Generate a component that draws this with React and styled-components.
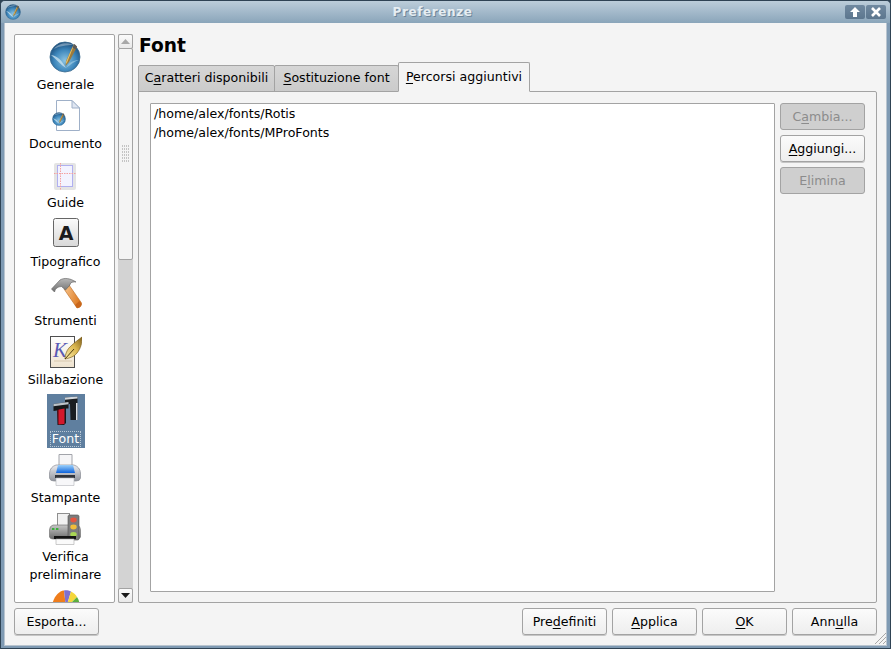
import styled, { createGlobalStyle } from "styled-components"

const GlobalStyle = createGlobalStyle`
    html, body {
        margin: 0;
        padding: 0;
        background: #2f4354;
    }
    * {
        box-sizing: border-box;
    }
`

const Window = styled.div`
    width: 891px;
    height: 649px;
    position: relative;
    display: flex;
    flex-direction: column;
    overflow: hidden;
    border-radius: 5px 5px 0 0;
    background: #7f9ab3;
    border: 1px solid #2f4354;
    font-family: "DejaVu Sans", sans-serif;
    font-size: 12.6px;
    color: #000000;
`

const TitleBar = styled.header`
    height: 22px;
    flex: none;
    display: flex;
    align-items: center;
    padding: 0 4px;
    background: linear-gradient(#bccdda, #8aa5ba);
`

const TitleText = styled.span`
    flex: 1;
    text-align: center;
    color: #e6edf2;
    font-weight: bold;
    font-size: 12px;
    letter-spacing: 0.6px;
    text-shadow: 1px 1px 0 #6d8599;
`

const TitleButton = styled.span`
    width: 20px;
    height: 14px;
    margin-left: 1px;
    border-radius: 2px;
    display: flex;
    align-items: center;
    justify-content: center;
    background: linear-gradient(#7089a0, #5c768e);
`

const Body = styled.main`
    flex: 1;
    min-height: 0;
    margin: 0 3px 2px 3px;
    padding: 11px 9px 10px 9px;
    display: flex;
    flex-direction: column;
    gap: 5px;
    background: #f4f4f4;
    border: solid #b8c4cf;
    border-width: 0 1px 1px 1px;
`

const MainRow = styled.div`
    flex: 1;
    min-height: 0;
    display: flex;
`

const Sidebar = styled.nav`
    width: 101px;
    flex: none;
    overflow: hidden;
    background: #ffffff;
    border: 1px solid #a3a3a3;
    border-radius: 2px;
    padding: 5px 0 0 2px;
    display: flex;
    flex-direction: column;
    align-items: center;
    gap: 5px;
`

const NavItem = styled.div`
    flex: none;
    display: flex;
    flex-direction: column;
    align-items: center;
    padding: 1px 3px 0;
    text-align: center;
    line-height: 18px;
    background: ${({ $selected }) => ($selected ? "#5f7f9f" : "transparent")};
    color: ${({ $selected }) => ($selected ? "#ffffff" : "#000000")};
`

const NavIcon = styled.svg`
    width: 32px;
    height: 32px;
    display: block;
    flex: none;
`

const NavLabel = styled.span`
    margin: ${({ $selected }) => ($selected ? "3px -1px 0" : "3px 0 0")};
    padding: ${({ $selected }) => ($selected ? "0 3px" : "0")};
    white-space: pre-line;
    outline: ${({ $selected }) => ($selected ? "1px dotted #b9c8d6" : "none")};
    outline-offset: -2px;
`

const ScrollBar = styled.div`
    width: 15px;
    flex: none;
    margin: 0 5px 0 3px;
    display: flex;
    flex-direction: column;
    background: #d3d3d3;
`

const ScrollButton = styled.div`
    height: 15px;
    flex: none;
    display: flex;
    align-items: center;
    justify-content: center;
    background: linear-gradient(#fbfbfb, #e9e9e9);
    border: 1px solid #a3a3a3;
    border-radius: 2px;
`

const ScrollTrack = styled.div`
    flex: 1;
    min-height: 0;
`

const ScrollThumb = styled.div`
    height: 212px;
    margin-top: -1px;
    display: flex;
    align-items: center;
    justify-content: center;
    background: #f4f4f4;
    border: 1px solid #a3a3a3;
    border-radius: 2px;
`

const Panel = styled.section`
    flex: 1;
    min-width: 0;
    display: flex;
    flex-direction: column;
`

const Heading = styled.h1`
    margin: 0;
    height: 28px;
    flex: none;
    padding: 1px 0 0 1px;
    font-size: 18.6px;
    line-height: 22px;
    font-weight: bold;
`

const TabRow = styled.div`
    height: 30px;
    flex: none;
    display: flex;
    align-items: flex-end;
    margin-bottom: -1px;
    position: relative;
    z-index: 1;
`

const Tab = styled.div`
    height: ${({ $active }) => ($active ? "30px" : "27px")};
    width: ${({ $width }) => $width}px;
    margin-left: ${({ $first }) => ($first ? "0" : "-1px")};
    display: flex;
    align-items: center;
    justify-content: center;
    padding-bottom: 2px;
    background: ${({ $active }) => ($active ? "#f4f4f4" : "linear-gradient(#d6d6d6, #cbcbcb)")};
    border: 1px solid #a3a3a3;
    border-bottom-color: ${({ $active }) => ($active ? "#f4f4f4" : "#a3a3a3")};
    border-radius: 2px 2px 0 0;
    white-space: nowrap;
`

const TabPane = styled.div`
    flex: 1;
    min-height: 0;
    display: flex;
    gap: 5px;
    padding: 11px 11px 10px 11px;
    border: 1px solid #a3a3a3;
    border-radius: 0 2px 2px 2px;
`

const PathList = styled.div`
    flex: 1;
    min-width: 0;
    padding: 0 3px;
    background: #ffffff;
    border: 1px solid #a3a3a3;
    border-radius: 1px;
    line-height: 19px;
`

const SideButtons = styled.div`
    width: 85px;
    flex: none;
    display: flex;
    flex-direction: column;
    gap: 5px;
`

const Button = styled.div`
    width: 85px;
    height: 27px;
    flex: none;
    display: flex;
    align-items: center;
    justify-content: center;
    white-space: nowrap;
    border: 1px solid #a3a3a3;
    border-radius: 3px;
    background: ${({ $disabled }) => ($disabled ? "#cfcfcf" : "linear-gradient(#fbfbfb, #eeeeee)")};
    color: ${({ $disabled }) => ($disabled ? "#8c8c8c" : "#000000")};
    box-shadow: ${({ $disabled }) => ($disabled ? "none" : "0 1px 0 #c6c6c6")};
`

const Footer = styled.footer`
    flex: none;
    display: flex;
    justify-content: space-between;
`

const FooterRight = styled.div`
    display: flex;
    gap: 5px;
`

const Key = styled.span`
    text-decoration: underline;
    text-underline-offset: 2px;
`

const ResizeGrip = styled.svg`
    position: absolute;
    right: 3px;
    bottom: 3px;
    width: 14px;
    height: 14px;
`

const Globe = ({ id, x = 0, y = 0, size = 32 }) => (
    <svg x={x} y={y} width={size} height={size} viewBox="0 0 32 32">
        <defs>
            <radialGradient id={id} cx="0.5" cy="0.62" r="0.6">
                <stop offset="0" stopColor="#8cc4e2" />
                <stop offset="0.6" stopColor="#3d86bb" />
                <stop offset="1" stopColor="#1d4f7c" />
            </radialGradient>
        </defs>
        <circle cx="16" cy="16" r="15" fill={`url(#${id})`} stroke="#3a6a8e" strokeWidth="0.8" />
        <path d="M2 14 C8 19 12 24 17 27 C13 20 9 15 2 14Z" fill="#cfe6f2" opacity="0.75" />
        <path d="M17 27 C21 24 26 20 30 19 C25 19 20 21 17 27Z" fill="#a8d2e8" opacity="0.6" />
        <path d="M5 8 C9 2 19 1 24 4 C18 4 10 5 5 8Z" fill="#ffffff" opacity="0.35" />
        <path d="M25 3 L28 6 L20 21 L16.5 25 L17 20Z" fill="#9c7a3c" />
        <path d="M25 4 L23.5 6 L17 21 L17.5 23Z" fill="#e9c56a" />
        <path d="M25.5 3 L28 5.5 L26.5 8.5 L23.5 6.5Z" fill="#5a5a5a" />
    </svg>
)

const GeneraleIcon = () => (
    <NavIcon viewBox="0 0 32 32">
        <Globe id="globeMain" />
    </NavIcon>
)

const DocumentoIcon = () => (
    <NavIcon viewBox="0 0 32 32">
        <path d="M7.5 0.5 H23 L30.5 8 V30.5 H7.5Z" fill="#ffffff" stroke="#9fb0c8" />
        <path d="M23 0.5 V8 H30.5Z" fill="#dfe6f2" stroke="#9fb0c8" />
        <Globe id="globeDoc" x={3} y={12} size={14} />
    </NavIcon>
)

const GuideIcon = () => (
    <NavIcon viewBox="0 0 32 32">
        <rect x="5" y="4" width="22" height="27" rx="2" fill="#e4e4e4" />
        <rect x="8.5" y="6.5" width="15" height="21" fill="#f3f3ff" stroke="#b0b0f0" />
        <path d="M5 14.5 H27" stroke="#f4a0a0" strokeDasharray="1.5 1" />
        <path d="M11.5 4 V31" stroke="#f4a0a0" strokeDasharray="1.5 1" />
    </NavIcon>
)

const TipograficoIcon = () => (
    <NavIcon viewBox="0 0 32 32">
        <defs>
            <linearGradient id="keyFill" x1="0" y1="0" x2="0" y2="1">
                <stop offset="0" stopColor="#fbfbfb" />
                <stop offset="1" stopColor="#d8d8d8" />
            </linearGradient>
        </defs>
        <rect x="3.5" y="0.5" width="25" height="28" rx="2" fill="url(#keyFill)" stroke="#666666" />
        <text x="16" y="21.5" textAnchor="middle" fontFamily="DejaVu Sans" fontWeight="bold" fontSize="19" fill="#1c1c1c">A</text>
    </NavIcon>
)

const StrumentiIcon = () => (
    <NavIcon viewBox="0 0 32 32">
        <defs>
            <linearGradient id="handle" x1="0" y1="0" x2="1" y2="0.4">
                <stop offset="0" stopColor="#f8c78f" />
                <stop offset="1" stopColor="#dd7a22" />
            </linearGradient>
            <linearGradient id="hammerHead" x1="0" y1="0" x2="0" y2="1">
                <stop offset="0" stopColor="#b8b8b8" />
                <stop offset="1" stopColor="#6e6e6e" />
            </linearGradient>
        </defs>
        <path d="M14 12 L19 8 L31.5 26 Q32 30 27 31Z" fill="url(#handle)" stroke="#b9671f" strokeWidth="0.6" />
        <path d="M27 31 Q31 31 31.5 27 L29.5 24 L25 28Z" fill="#c9661b" />
        <path d="M1.5 12 L10 3 C14 0.5 20 1 26 5 C22 4.5 20 6 20 8 L15.5 13 L11.5 9.5 C8 9.5 5 11.5 4.5 15Z" fill="url(#hammerHead)" stroke="#5a5a5a" strokeWidth="0.6" />
    </NavIcon>
)

const SillabazioneIcon = () => (
    <NavIcon viewBox="0 0 32 32">
        <defs>
            <linearGradient id="sheet" x1="0" y1="0" x2="0" y2="1">
                <stop offset="0" stopColor="#ffffff" />
                <stop offset="1" stopColor="#efe3cf" />
            </linearGradient>
            <linearGradient id="nib" x1="0" y1="1" x2="1" y2="0">
                <stop offset="0" stopColor="#fbeeb2" />
                <stop offset="0.55" stopColor="#dcb850" />
                <stop offset="1" stopColor="#7d5d1a" />
            </linearGradient>
        </defs>
        <rect x="0.5" y="0.5" width="24" height="31" fill="url(#sheet)" stroke="#4f4f4f" />
        <text x="3" y="21" fontFamily="Liberation Serif" fontStyle="italic" fontSize="21" fill="#5a5ab4">K</text>
        <path d="M4 25 H22" stroke="#d8c7ac" />
        <path d="M32 1 C32 7 31 12 27 17 C24 21 19 22 15 23 C15 19 17 13 21 10 C24 7 28 4 32 1Z" fill="url(#nib)" stroke="#7d5d1a" strokeWidth="0.7" />
        <path d="M15 23 L24 13" stroke="#4d3a10" strokeWidth="1" />
    </NavIcon>
)

const FontIcon = () => (
    <NavIcon viewBox="0 0 32 32">
        <path d="M15 2.5 L27.5 1.5 L27.5 8 L27.5 25 L20.5 25 L20 9 L15 9.5Z" fill="#1a1d20" />
        <path d="M15 2.5 L27.5 1.5 L27.5 3.6 L15 4.8Z" fill="#d2d7dc" />
        <path d="M26 8 L27.5 8 L27.5 25 L26 25Z" fill="#d9dee3" />
        <path d="M3.5 9 L18.5 7 L18.5 13.5 L16 13.5 L16 28 L14 30 L7.5 30 L7 15.5 L3.5 16Z" fill="#16181a" />
        <path d="M3.5 9 L18.5 7 L18.5 9.2 L3.5 11.2Z" fill="#bcc3c9" />
        <path d="M9 14.5 L14.5 13.5 L14.5 29 L9 29.5Z" fill="#d3182c" />
        <path d="M7.5 15 L9 14.5 L9 29.5 L8 29.5Z" fill="#8d0f1d" />
    </NavIcon>
)

const StampanteIcon = () => (
    <NavIcon viewBox="0 0 32 32">
        <defs>
            <linearGradient id="printerBody" x1="0" y1="0" x2="0" y2="1">
                <stop offset="0" stopColor="#ececf0" />
                <stop offset="1" stopColor="#8f939c" />
            </linearGradient>
            <linearGradient id="printerBlue" x1="0" y1="0" x2="0" y2="1">
                <stop offset="0" stopColor="#9cd0fa" />
                <stop offset="1" stopColor="#0d63dc" />
            </linearGradient>
        </defs>
        <path d="M10 0.5 H23 V14 H10Z" fill="#f5f5f7" stroke="#a2a4aa" />
        <path d="M7 11 H25 Q31 13 31.5 19 V24 Q31 27 27 27 H5 Q1 27 0.5 24 V19 Q1 13 7 11Z" fill="url(#printerBody)" stroke="#8a8d94" strokeWidth="0.7" />
        <path d="M9 11 H24 L26 19 H7Z" fill="url(#printerBlue)" />
        <path d="M6 21 H26 V24 H6Z" fill="#30333a" />
        <path d="M7 24 H25 V31.5 H7Z" fill="#f7f7f9" stroke="#b4b6bb" strokeWidth="0.6" />
    </NavIcon>
)

const VerificaIcon = () => (
    <NavIcon viewBox="0 0 32 32">
        <defs>
            <linearGradient id="preflightBody" x1="0" y1="0" x2="0" y2="1">
                <stop offset="0" stopColor="#c6c6c6" />
                <stop offset="1" stopColor="#6a6a6a" />
            </linearGradient>
        </defs>
        <rect x="8.5" y="0.5" width="12" height="13" fill="#f1f1f1" stroke="#8f8f8f" />
        <path d="M4 12 H28 Q31.5 13 31.5 17 V24 Q31 26 28 26 H4 Q1 26 0.5 24 V17 Q0.5 13 4 12Z" fill="url(#preflightBody)" stroke="#666666" strokeWidth="0.6" />
        <rect x="3" y="15" width="2.4" height="2" fill="#39b03c" />
        <rect x="7" y="15" width="2.4" height="2" fill="#39b03c" />
        <rect x="19" y="2" width="11" height="25" rx="1.5" fill="#7c7c7c" stroke="#4d4d4d" strokeWidth="0.6" />
        <ellipse cx="24.5" cy="7" rx="3.2" ry="2.4" fill="#e4553f" />
        <ellipse cx="24.5" cy="14" rx="3.2" ry="2.4" fill="#f1bd39" />
        <ellipse cx="24.5" cy="21.5" rx="3.2" ry="2.4" fill="#a9d654" />
        <path d="M5 23 H27 V26 H5Z" fill="#141414" />
        <path d="M7 26 H25 V31.5 H7Z" fill="#fafafa" stroke="#a9a9a9" strokeWidth="0.6" />
    </NavIcon>
)

const ColorIcon = () => (
    <NavIcon viewBox="0 0 32 32">
        <path d="M16 18 L2 18 C2 9 8 1 14 0.5Z" fill="#ef7d1c" />
        <path d="M16 18 L14 0.5 C16 0 19 0.5 21 1.5Z" fill="#7f70cf" />
        <path d="M16 18 L21 1.5 C24 3 26 5 27 7Z" fill="#f4d63b" />
        <path d="M16 18 L27 7 C29 10 30 14 30 18Z" fill="#5aae3e" />
    </NavIcon>
)

const navItems = [
    { label: "Generale", icon: GeneraleIcon },
    { label: "Documento", icon: DocumentoIcon },
    { label: "Guide", icon: GuideIcon },
    { label: "Tipografico", icon: TipograficoIcon },
    { label: "Strumenti", icon: StrumentiIcon },
    { label: "Sillabazione", icon: SillabazioneIcon },
    { label: "Font", icon: FontIcon, selected: true },
    { label: "Stampante", icon: StampanteIcon },
    { label: "Verifica\npreliminare", icon: VerificaIcon },
    { label: "", icon: ColorIcon },
]

const App = () => {
    return (
        <>
            <GlobalStyle />
            <Window>
                <TitleBar>
                    <svg width="16" height="16" viewBox="0 0 32 32">
                        <Globe id="globeTitle" />
                    </svg>
                    <TitleText>Preferenze</TitleText>
                    <TitleButton>
                        <svg width="12" height="10" viewBox="0 0 12 10">
                            <path d="M6 0 L11 5 H8 V10 H4 V5 H1Z" fill="#ffffff" />
                        </svg>
                    </TitleButton>
                    <TitleButton>
                        <svg width="12" height="10" viewBox="0 0 12 10">
                            <path d="M2 1 L10 9 M10 1 L2 9" stroke="#ffffff" strokeWidth="2.6" />
                        </svg>
                    </TitleButton>
                </TitleBar>
                <Body>
                    <MainRow>
                        <Sidebar>
                            {navItems.map(({ label, icon: Icon, selected }) => (
                                <NavItem key={label || "colori"} $selected={selected}>
                                    <Icon />
                                    {label && <NavLabel $selected={selected}>{label}</NavLabel>}
                                </NavItem>
                            ))}
                        </Sidebar>
                        <ScrollBar>
                            <ScrollButton>
                                <svg width="9" height="5" viewBox="0 0 9 5">
                                    <path d="M4.5 0 L9 5 H0Z" fill="#a8a8a8" />
                                </svg>
                            </ScrollButton>
                            <ScrollThumb>
                                <svg width="9" height="18" viewBox="0 0 9 18">
                                    <path d="M1 1 H8 M1 4 H8 M1 7 H8 M1 10 H8 M1 13 H8 M1 16 H8" stroke="#c4c4c4" strokeWidth="2" strokeDasharray="1 1" />
                                </svg>
                            </ScrollThumb>
                            <ScrollTrack />
                            <ScrollButton>
                                <svg width="9" height="5" viewBox="0 0 9 5">
                                    <path d="M0 0 H9 L4.5 5Z" fill="#1a1a1a" />
                                </svg>
                            </ScrollButton>
                        </ScrollBar>
                        <Panel>
                            <Heading>Font</Heading>
                            <TabRow>
                                <Tab $first $width={137}>
                                    <span>C<Key>a</Key>ratteri disponibili</span>
                                </Tab>
                                <Tab $width={125}>
                                    <span><Key>S</Key>ostituzione font</span>
                                </Tab>
                                <Tab $active $width={132}>
                                    <span><Key>P</Key>ercorsi aggiuntivi</span>
                                </Tab>
                            </TabRow>
                            <TabPane>
                                <PathList>
                                    <div>/home/alex/fonts/Rotis</div>
                                    <div>/home/alex/fonts/MProFonts</div>
                                </PathList>
                                <SideButtons>
                                    <Button $disabled><span>C<Key>a</Key>mbia...</span></Button>
                                    <Button><span><Key>A</Key>ggiungi...</span></Button>
                                    <Button $disabled><span>E<Key>l</Key>imina</span></Button>
                                </SideButtons>
                            </TabPane>
                        </Panel>
                    </MainRow>
                    <Footer>
                        <Button>Esporta...</Button>
                        <FooterRight>
                            <Button><span>Pre<Key>d</Key>efiniti</span></Button>
                            <Button><span><Key>A</Key>pplica</span></Button>
                            <Button><span><Key>O</Key>K</span></Button>
                            <Button><span>Ann<Key>u</Key>lla</span></Button>
                        </FooterRight>
                    </Footer>
                </Body>
                <ResizeGrip viewBox="0 0 14 14">
                    <path d="M13 2 L2 13 M13 6 L6 13 M13 10 L10 13" stroke="#a8a8a8" strokeWidth="1" />
                </ResizeGrip>
            </Window>
        </>
    )
}

export default App
